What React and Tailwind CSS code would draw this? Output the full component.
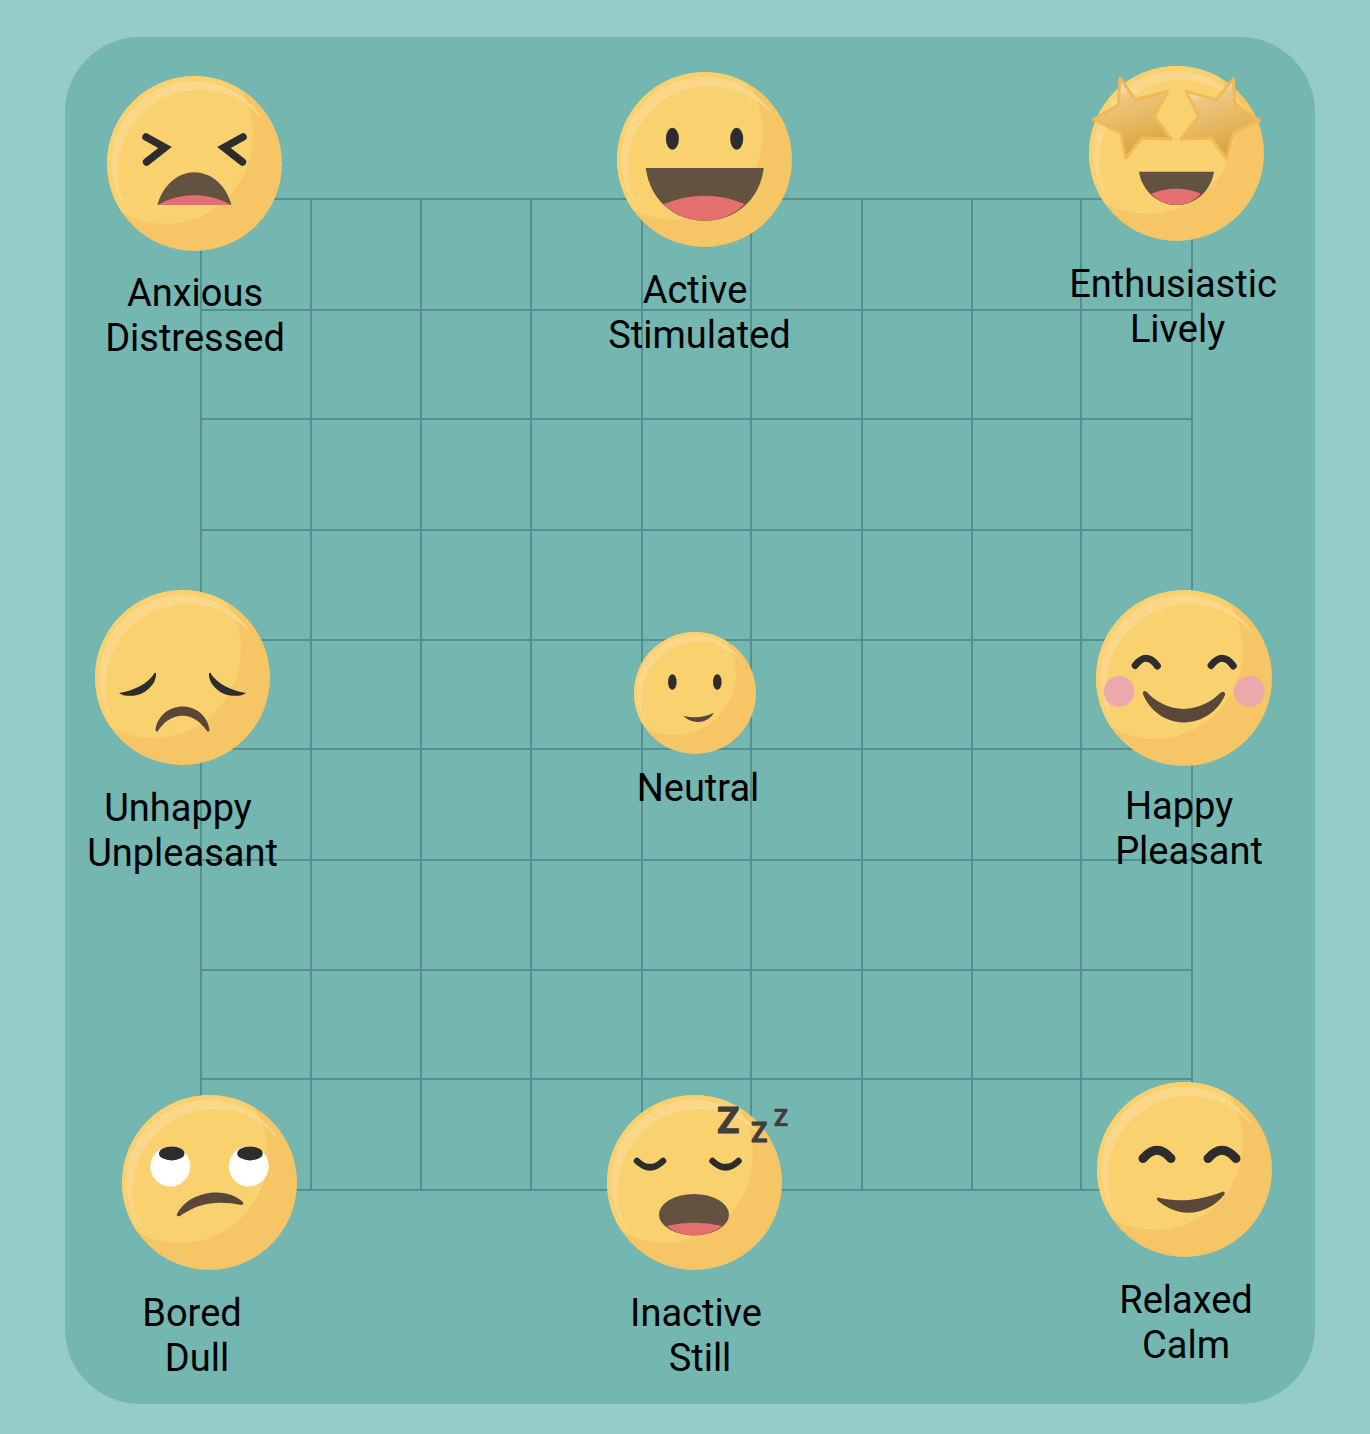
const INK = '#2e2d2d'
const BROWN = '#645240'
const DARK_BROWN = '#5a4739'
const PINK = '#e36f6f'

function Eyes({ d, width = 6 }) {
  return (
    <>
      {d.map((p) => (
        <path key={p} d={p} fill="none" stroke={INK} strokeWidth={width} strokeLinecap="round" />
      ))}
    </>
  )
}

function Star({ points }) {
  return (
    <polygon
      points={points}
      fill="url(#star-fill)"
      stroke="#f0b856"
      strokeWidth="3"
      strokeLinejoin="round"
    />
  )
}

const features = {
  anxious: (
    <>
      <path d="M39 61 L58 71.5 L39.5 86" fill="none" stroke={INK} strokeWidth="7.5" strokeLinecap="round" />
      <path d="M136 61 L117 71.5 L135.5 86" fill="none" stroke={INK} strokeWidth="7.5" strokeLinecap="round" />
      <path d="M50.4 129 C56 108 72 96.3 87.3 96.3 C103 96.3 119 108 124.4 129 Z" fill={BROWN} />
      <path d="M50.4 129 Q87.3 109 124.4 129 Z" fill={PINK} />
    </>
  ),
  active: (
    <>
      <ellipse cx="55.4" cy="66.7" rx="6.5" ry="11" fill={INK} />
      <ellipse cx="119.7" cy="66.7" rx="6.5" ry="11" fill={INK} />
      <path d="M28.7 96 H146.7 C143 128 118 148.7 87.7 148.7 C57 148.7 33 128 28.7 96 Z" fill={BROWN} />
      <path d="M46.7 132 Q87.7 115.4 127.7 132 C117 143 103 148.7 87.7 148.7 C72 148.7 57 143 46.7 132 Z" fill={PINK} />
    </>
  ),
  lively: (
    <>
      <defs>
        <linearGradient id="star-fill" x1="0.3" y1="0" x2="0.6" y2="1">
          <stop offset="0" stopColor="#fff3da" />
          <stop offset="0.25" stopColor="#edc67e" />
          <stop offset="0.65" stopColor="#e3b459" />
          <stop offset="1" stopColor="#d69e35" />
        </linearGradient>
      </defs>
      <Star points="31,12 46,33.7 78.7,25.4 65.3,50.4 82,73 52.7,72 36.7,92 32,66.7 4.3,53.7 29.3,38.7" />
      <Star points="144.3,13 127,33.7 97,25.4 109.7,50.4 92,73 122.3,72 137.7,93 144.3,66.7 170.5,54.7 146,38.7" />
      <path d="M50 105.7 H125 C122 125 106 139 87.7 139 C69 139 53 125 50 105.7 Z" fill={BROWN} />
      <path d="M62 127.7 Q87.7 117.7 112 127.7 C105 135 97 139 87.7 139 C78 139 69 135 62 127.7 Z" fill={PINK} />
    </>
  ),
  unhappy: (
    <>
      <path d="M24 103 C38.3 100.7 53.3 94 59.7 82.7 L61 83 C62 95 48.3 106.5 35 105.8 C30 105.8 26.7 105 24 103 Z" fill={INK} />
      <path d="M151 103 C136.7 100.7 121.7 94 115.3 82.7 L114 83 C113 95 126.7 106.5 140 105.8 C145 105.8 148.3 105 151 103 Z" fill={INK} />
      <path d="M60.5 140 C62 126 74 116.4 87.7 116.4 C101 116.4 113 126 114.5 140 Q114 142.5 112 141 C105 131 97 125.7 87.7 125.7 C78 125.7 69 131 63 141 Q61 142.5 60.5 140 Z" fill={DARK_BROWN} />
    </>
  ),
  neutral: (
    <>
      <ellipse cx="55" cy="71.7" rx="6.2" ry="11" fill={INK} />
      <ellipse cx="119.5" cy="71.7" rx="6.2" ry="11" fill={INK} />
      <path d="M70.7 120 C85 124 100 122.5 114.7 115.7 C110 124 101 129 92.2 129 C84 129 75 125 70.7 120 Z" fill={DARK_BROWN} />
    </>
  ),
  happy: (
    <>
      <circle cx="23" cy="100.7" r="15.3" fill="#eba9ad" />
      <circle cx="152.3" cy="100.7" r="15.3" fill="#eba9ad" />
      <Eyes width={7} d={['M39 75 Q50 60.5 61 75.5', 'M114.5 75 Q125.7 60.5 136.5 75.5']} />
      <path d="M46.5 103 Q47 99.5 50 101 C60 112 73 118.3 87.3 118.3 C102 118.3 115 111 124 102 Q128 99.5 128.5 104 C122 120 106 131.7 87.3 131.7 C69 131.7 53 120 46.5 103 Z" fill={DARK_BROWN} />
    </>
  ),
  bored: (
    <>
      <circle cx="48.3" cy="71.4" r="20" fill="#fff" />
      <circle cx="126.7" cy="71.4" r="20" fill="#fff" />
      <ellipse cx="49.7" cy="58.4" rx="12.7" ry="7" fill={INK} />
      <ellipse cx="128" cy="58.4" rx="12.7" ry="7" fill={INK} />
      <path d="M55 119 C62 105 78 97.4 94.7 97.4 C105 97.4 115 101 121 107 Q122 110 119 110 C108 107.5 97 107 88 108.4 C77 110 68 114 58 121 Q54 122 55 119 Z" fill={DARK_BROWN} />
    </>
  ),
  inactive: (
    <>
      <Eyes width={6.5} d={['M30 66 Q43 78.6 56 66', 'M105.5 66 Q118.7 78.6 131.5 66']} />
      <ellipse cx="87" cy="119.7" rx="35" ry="20.7" fill={BROWN} />
      <path d="M59.5 131 Q87 124.5 115 131 C107 137.5 97 140.4 87 140.4 C77 140.4 67 137.5 59.5 131 Z" fill={PINK} />
      <g fill="#3f3d3e" stroke="#3f3d3e" strokeLinejoin="round" fontFamily="Roboto, sans-serif" fontWeight="700">
        <text x="110" y="38" fontSize="37" strokeWidth="1">Z</text>
        <text x="144" y="46.5" fontSize="27" strokeWidth="0.8">Z</text>
        <text x="167" y="30.5" fontSize="23" strokeWidth="0.6">Z</text>
      </g>
    </>
  ),
  relaxed: (
    <>
      <Eyes width={9} d={['M46 76.5 Q60 60 74 76.5', 'M111 76.5 Q125 60 139 76.5']} />
      <path d="M61 115.5 C82 121 105 118 126 109.5 Q129 110 127 113 C118 124 105 130.7 91.3 130.7 C79 130.7 68 125 60 118 Q59.5 115.5 61 115.5 Z" fill={DARK_BROWN} />
    </>
  ),
}

function Face({ name, className, clipId }) {
  return (
    <svg viewBox="0 0 175 175" className={`absolute overflow-visible ${className}`}>
      <defs>
        <clipPath id={clipId}>
          <circle cx="87.5" cy="87.5" r="87.5" />
        </clipPath>
      </defs>
      <circle cx="87.5" cy="87.5" r="87.5" fill="#f6c565" />
      <circle cx="58" cy="60" r="88" fill="#f9d16f" clipPath={`url(#${clipId})`} />
      <path
        d="M157 45 A82.04 82.04 0 1 0 20 135 A82.3 82.3 0 0 1 157 45 Z"
        fill="#fbd889"
      />
      {features[name]}
    </svg>
  )
}

const moods = [
  { name: 'anxious', face: 'left-[42px] top-[39px] w-[175px] h-[175px]', label: 'left-[-20px] top-[234px]', lines: ['Anxious', 'Distressed'] },
  { name: 'active', face: 'left-[552px] top-[35px] w-[175px] h-[175px]', label: 'left-[480px] top-[231px]', lines: ['Active', 'Stimulated'], shift: 'pl-[9px]' },
  { name: 'lively', face: 'left-[1024px] top-[29px] w-[175px] h-[175px]', label: 'left-[958px] top-[225px]', lines: ['Enthusiastic', 'Lively'], shift: 'pl-[9px]' },
  { name: 'unhappy', face: 'left-[30px] top-[553px] w-[175px] h-[175px]', label: 'left-[-37px] top-[749px]', lines: ['Unhappy', 'Unpleasant'], shift: 'pl-[9px]' },
  { name: 'neutral', face: 'left-[569px] top-[595px] w-[122px] h-[122px]', label: 'left-[483px] top-[729px]', lines: ['Neutral'] },
  { name: 'happy', face: 'left-[1031px] top-[553px] w-[176px] h-[176px]', label: 'left-[964px] top-[747px]', lines: ['Happy', 'Pleasant'], shift: 'pl-[20px]' },
  { name: 'bored', face: 'left-[57px] top-[1058px] w-[175px] h-[175px]', label: 'left-[-23px] top-[1254px]', lines: ['Bored', 'Dull'], shift: 'pl-[10px]' },
  { name: 'inactive', face: 'left-[542px] top-[1058px] w-[175px] h-[175px]', label: 'left-[481px] top-[1254px]', lines: ['Inactive', 'Still'], shift: 'pl-[8px]' },
  { name: 'relaxed', face: 'left-[1032px] top-[1045px] w-[175px] h-[175px]', label: 'left-[971px] top-[1241px]', lines: ['Relaxed', 'Calm'] },
]

export default function App() {
  return (
    <div className="min-h-[1434px] bg-[#95ccc7] pl-[65px] pt-[37px] font-[family-name:Roboto,sans-serif] text-black">
      <div className="relative h-[1367px] w-[1250px] rounded-[75px] bg-[#74b6b0]">
        <div className="absolute left-[135px] top-[161px] grid h-[993px] w-[993px] grid-cols-[110px_110px_110px_111px_109px_111px_110px_109px_111px] grid-rows-[111px_109px_111px_110px_109px_111px_110px_109px_111px] border-l-2 border-t-2 border-[#578f8e]">
          {Array.from({ length: 81 }, (_, i) => (
            <div key={i} className="border-b-2 border-r-2 border-[#578f8e]" />
          ))}
        </div>

        {moods.map((m) => (
          <div key={m.name}>
            <Face name={m.name} className={m.face} clipId={`clip-${m.name}`} />
            <div className={`absolute w-[300px] text-center text-[38px] leading-[45px] ${m.label}`}>
              <p>{m.lines[0]}</p>
              {m.lines[1] && <p className={m.shift}>{m.lines[1]}</p>}
            </div>
          </div>
        ))}
      </div>
    </div>
  )
}
